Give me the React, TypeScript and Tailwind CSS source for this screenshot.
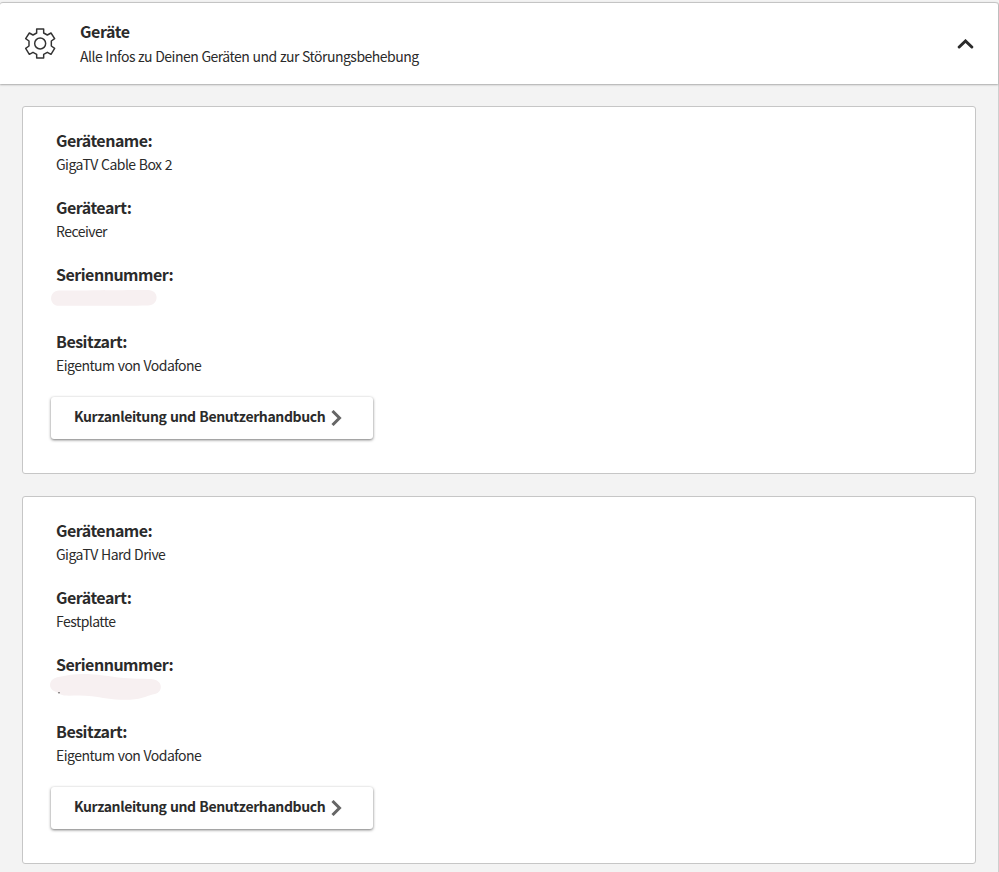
import { useState } from 'react';

interface Device {
  id: string;
  name: string;
  kind: string;
  owner: string;
  redaction: 'bar' | 'smear';
}

const DEVICES: Device[] = [
  {
    id: 'cable-box',
    name: 'GigaTV Cable Box 2',
    kind: 'Receiver',
    owner: 'Eigentum von Vodafone',
    redaction: 'bar',
  },
  {
    id: 'hard-drive',
    name: 'GigaTV Hard Drive',
    kind: 'Festplatte',
    owner: 'Eigentum von Vodafone',
    redaction: 'smear',
  },
];

function GearIcon() {
  return (
    <svg
      className="w-10 h-10 shrink-0"
      viewBox="0 0 120 120"
      fill="none"
      stroke="#333"
      strokeWidth="4.4"
      strokeLinejoin="round"
    >
      <path d="M50 15H71V27L82 33L93 27L104 44L94 51V66L104 73L93 91L82 85L71 91V102H50V91L39 85L28 91L17 73L27 66V51L17 44L28 27L39 33L50 27Z" />
      <circle cx="60.5" cy="58.5" r="16.5" />
    </svg>
  );
}

/* Covers the serial number */
function Redaction({ variant }: { variant: Device['redaction'] }) {
  if (variant === 'bar') {
    return (
      <svg className="block w-[116px] h-[23px] -ml-[6px] overflow-visible" viewBox="0 0 116 23" fill="#f7f0f1">
        <path d="M9 3.5C35 3.300 75 3 98 2.900C109.500 2.900 109.500 18 98 18.400C76 19 36 18.800 9 18.800C-1.500 18.800 -1.500 3.700 9 3.500Z" />
      </svg>
    );
  }
  return (
    <svg className="block w-[116px] h-[23px] -ml-[6px] overflow-visible" viewBox="0 0 116 23" fill="#f7f0f1">
      <path d="M7 .2C15 -1 20 -2.800 31 -3.100C48 -3.200 58 -.8 74 1.100C86 2.300 97 1.500 104 2.500C113 4.500 113 15 105 17C98 18 94 22 80 22.700C63 23.300 53 20.500 42 19.200C31 17.800 22 19 14 18.500C10 17.600 8 15.800 5 14.500C-2 12 -2 2.500 7 .2Z" />
      <circle cx="9" cy="15.800" r=".8" fill="#555" />
    </svg>
  );
}

function Field({ label, children }: { label: string; children: React.ReactNode }) {
  return (
    <div>
      <dt className="h-[23px] text-[16px] leading-[21px] font-bold tracking-[-0.5px]">{label}</dt>
      <dd className="h-[23px] text-[14px] leading-[23px] tracking-[-0.54px] [word-spacing:0.6px]">{children}</dd>
    </div>
  );
}

function DeviceCard({ device }: { device: Device }) {
  return (
    <section className="h-[368px] rounded-[3px] border border-[#c6c6c6] bg-white pl-[33px] pt-[23px]">
      <dl className="flex flex-col gap-[21px]">
        <Field label="Gerätename:">{device.name}</Field>
        <Field label="Geräteart:">{device.kind}</Field>
        <Field label="Seriennummer:">
          <Redaction variant={device.redaction} />
        </Field>
        <Field label="Besitzart:">{device.owner}</Field>
      </dl>
      <button className="mt-[20px] -ml-[5px] flex h-[42px] w-[322px] items-center rounded-[3px] bg-white pl-[23px] pb-px text-[14px] font-bold tracking-[-0.38px] [word-spacing:0.7px] shadow-[0_1px_3px_rgba(0,0,0,0.55)] cursor-pointer">
        <span className="whitespace-nowrap pb-[3px]">Kurzanleitung und Benutzerhandbuch</span>
        <svg
          className="ml-[6px] h-[16px] w-[11px] shrink-0"
          viewBox="0 0 11 16"
          fill="none"
          stroke="#666"
          strokeWidth="3"
        >
          <path d="M1.500 1L8.500 8L1.500 15" />
        </svg>
      </button>
    </section>
  );
}

export default function App() {
  const [open, setOpen] = useState(true);

  return (
    <div className="h-[872px] overflow-hidden bg-[#f3f3f3] pt-[2px] font-['Noto_Sans_CJK_SC',sans-serif] text-[#2b2b2b]">
      <div className="h-full w-[999px] rounded-t-[3px] border-r border-[#cfcfcf]">
        <header className="flex h-[82px] items-center rounded-t-[3px] border-t border-[#c4c4c4] bg-white pl-5 pr-6 shadow-[0_1px_2px_rgba(0,0,0,0.3)]">
          <GearIcon />
          <div className="ml-5 grow">
            <h2 className="h-6 text-[16px] leading-[22px] font-bold tracking-[-0.4px]">Geräte</h2>
            <p className="text-[14px] leading-6 tracking-[-0.5px] [word-spacing:0.5px]">
              Alle Infos zu Deinen Geräten und zur Störungsbehebung
            </p>
          </div>
          <button onClick={() => setOpen(!open)} aria-label="Geräte" aria-expanded={open} className="cursor-pointer">
            <svg
              className={`block h-[10px] w-[17px] ${open ? '' : 'rotate-180'}`}
              viewBox="0 0 17 10"
              fill="none"
              stroke="#2b2b2b"
              strokeWidth="3"
              strokeLinecap="round"
            >
              <path d="M2.200 8L8.500 2L14.800 8" />
            </svg>
          </button>
        </header>
        {open && (
          <main className="flex flex-col gap-[22px] pt-[22px] pl-[22px] pr-[22px]">
            {DEVICES.map((device) => (
              <DeviceCard key={device.id} device={device} />
            ))}
          </main>
        )}
      </div>
    </div>
  );
}
